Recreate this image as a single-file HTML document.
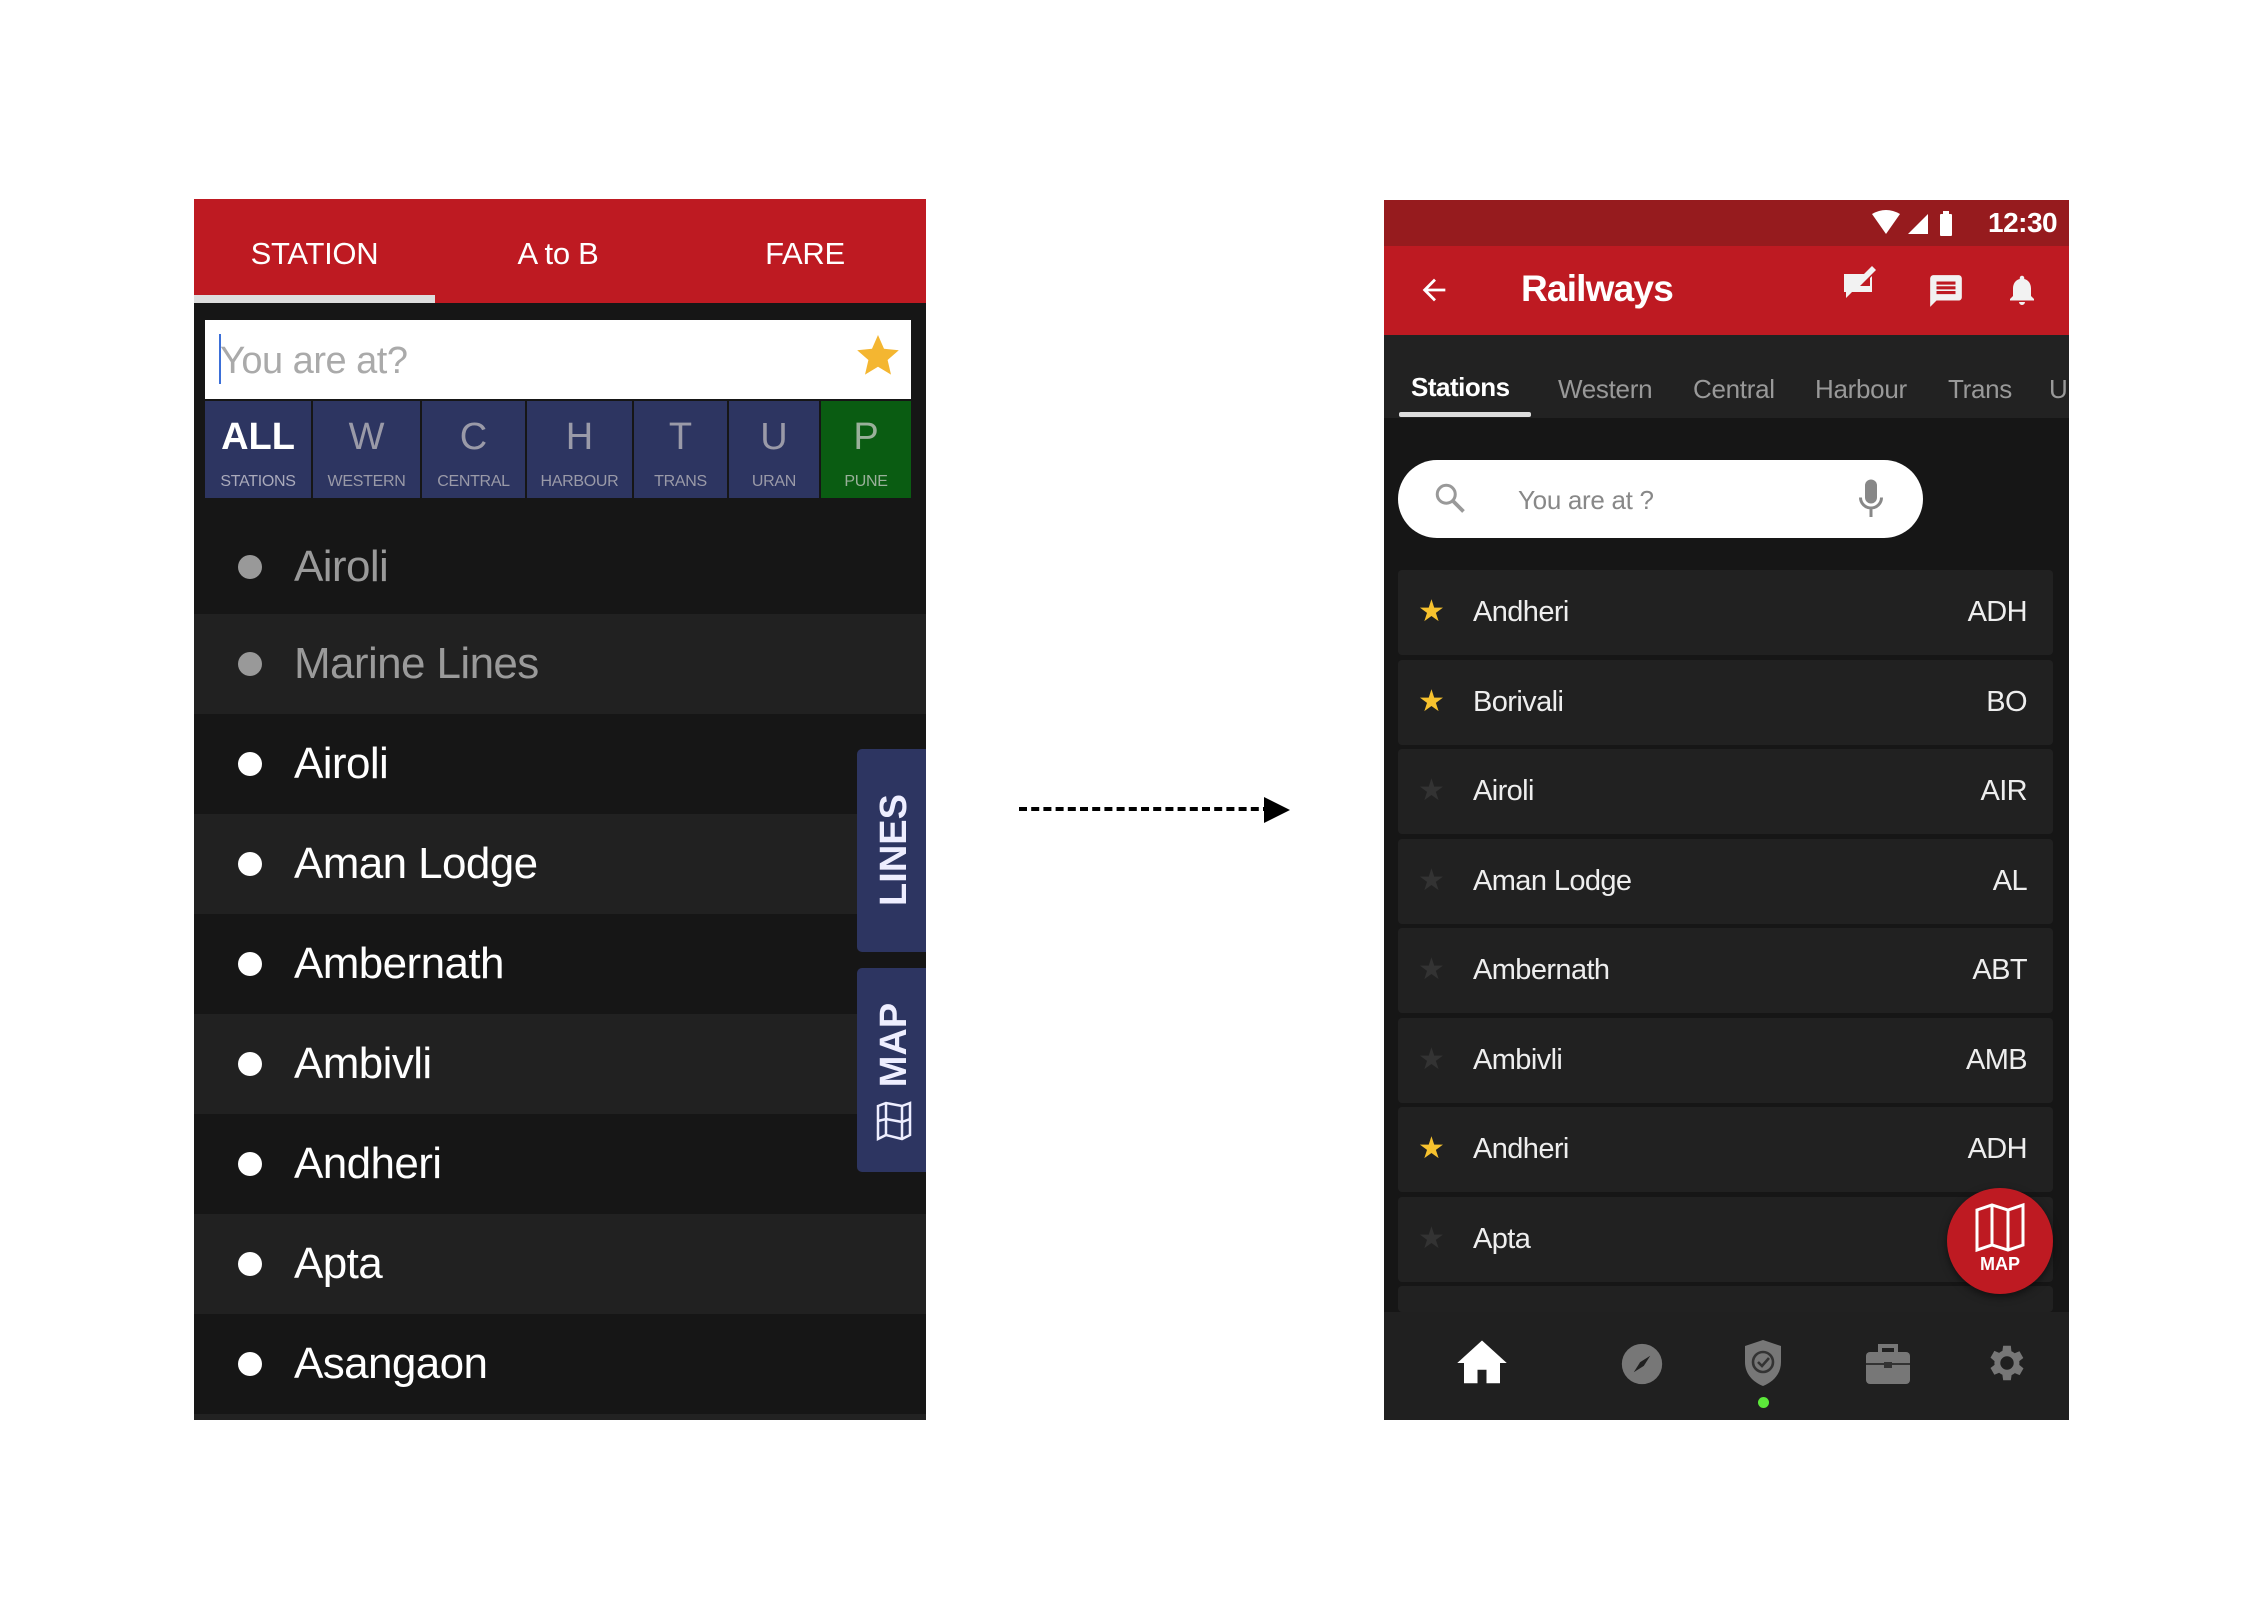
<!DOCTYPE html>
<html><head><meta charset="utf-8"><style>
*{margin:0;padding:0;box-sizing:border-box}
body{width:2262px;height:1618px;background:#fff;position:relative;overflow:hidden;font-family:"Liberation Sans",sans-serif}
.a{position:absolute}
.lrow{position:absolute;left:194px;width:732px;height:100px}
.dot{position:absolute;left:44px;top:38px;width:24px;height:24px;border-radius:50%;background:#fff}
.lrow span{position:absolute;left:100px;top:0;line-height:100px;font-size:44px;color:#fff;letter-spacing:-0.6px}
.lt{position:absolute;top:401px;height:97px;background:#2d3561;text-align:center;color:#9a9aa8}
.lt b{display:block;font-weight:normal;font-size:38px;margin-top:16px;line-height:40px}
.lt i{display:block;font-style:normal;font-size:16px;margin-top:16px;letter-spacing:-0.3px}
.card{position:absolute;left:1398px;width:655px;height:85px;background:#212121;border-radius:4px}
.card .s{position:absolute;left:20px;top:24px;font-size:30px;color:#333}
.card .s.y{color:#f7c22e}
.card .n{position:absolute;left:75px;top:0;line-height:85px;font-size:29px;color:#eee;letter-spacing:-0.6px}
.card .c{position:absolute;right:26px;top:0;line-height:85px;font-size:29px;color:#eee;letter-spacing:-0.6px}
</style></head><body>
<!-- LEFT -->
<div class="a" style="left:194px;top:199px;width:732px;height:1221px;background:#161616"></div>
<div class="a" style="left:194px;top:199px;width:732px;height:104px;background:#be1a22"></div>
<div class="a" style="left:194px;top:295px;width:241px;height:8px;background:#ddd"></div>
<div class="a" style="left:194px;top:236px;width:241px;text-align:center;color:#fff;font-size:31px;letter-spacing:-0.3px">STATION</div>
<div class="a" style="left:458px;top:236px;width:200px;text-align:center;color:#fff;font-size:31px;letter-spacing:-0.3px">A to B</div>
<div class="a" style="left:705px;top:236px;width:200px;text-align:center;color:#fff;font-size:31px;letter-spacing:-0.3px">FARE</div>
<div class="a" style="left:205px;top:320px;width:706px;height:79px;background:#fff"></div>
<div class="a" style="left:219px;top:334px;width:2px;height:50px;background:#3b6fd8"></div>
<div class="a" style="left:220px;top:340px;font-size:38px;color:#aaa;letter-spacing:-0.5px">You are at?</div>
<svg class="a" style="left:853px;top:331px" width="50" height="48" viewBox="0 0 24 24"><path d="M12 2l3 6.9 7.4.7-5.6 4.9 1.7 7.3L12 17.9 5.5 21.8l1.7-7.3L1.6 9.6 9 8.9z" fill="#f4b631"/></svg>
<div class="lt" style="left:205px;width:106px;color:#fff"><b style="font-weight:bold">ALL</b><i style="color:#aab">STATIONS</i></div>
<div class="lt" style="left:313px;width:107px"><b>W</b><i>WESTERN</i></div>
<div class="lt" style="left:422px;width:103px"><b>C</b><i>CENTRAL</i></div>
<div class="lt" style="left:527px;width:105px"><b>H</b><i>HARBOUR</i></div>
<div class="lt" style="left:634px;width:93px"><b>T</b><i>TRANS</i></div>
<div class="lt" style="left:729px;width:90px"><b>U</b><i>URAN</i></div>
<div class="lt" style="left:821px;width:90px;background:#0a5c12;color:#9ab09a"><b>P</b><i>PUNE</i></div>
<div class="lrow" style="top:517px;height:97px;background:#161616"><div class="dot" style="background:#999"></div><span style="color:#9a9a9a">Airoli</span></div>
<div class="lrow" style="top:614px;background:#212121"><div class="dot" style="background:#999"></div><span style="color:#9a9a9a">Marine Lines</span></div>
<div class="lrow" style="top:714px;background:#161616"><div class="dot"></div><span>Airoli</span></div>
<div class="lrow" style="top:814px;background:#212121"><div class="dot"></div><span>Aman Lodge</span></div>
<div class="lrow" style="top:914px;background:#161616"><div class="dot"></div><span>Ambernath</span></div>
<div class="lrow" style="top:1014px;background:#212121"><div class="dot"></div><span>Ambivli</span></div>
<div class="lrow" style="top:1114px;background:#161616"><div class="dot"></div><span>Andheri</span></div>
<div class="lrow" style="top:1214px;background:#212121"><div class="dot"></div><span>Apta</span></div>
<div class="lrow" style="top:1314px;background:#161616"><div class="dot"></div><span>Asangaon</span></div>
<div class="a" style="left:194px;top:1414px;width:732px;height:6px;background:#222"></div>
<div class="a" style="left:857px;top:749px;width:69px;height:203px;background:#2d3561;border-radius:5px 0 0 5px"></div>
<div class="a" style="left:857px;top:968px;width:69px;height:204px;background:#2d3561;border-radius:5px 0 0 5px"></div>
<div class="a" style="left:829px;top:830px;width:130px;height:40px;transform:rotate(-90deg);text-align:center;font-weight:bold;font-size:38px;color:#eef;line-height:40px">LINES</div>
<div class="a" style="left:829px;top:1025px;width:130px;height:40px;transform:rotate(-90deg);text-align:center;font-weight:bold;font-size:38px;color:#eef;line-height:40px">MAP</div>
<svg class="a" style="left:874px;top:1100px" width="40" height="44" viewBox="0 0 40 44"><path d="M4 6l8-3 16 3 8-3v32l-8 4-16-4-8 4z M4 6v32 M12 3v32 M28 6v32 M36 3v32 M4 21l8-2 16 3 8-3" fill="none" stroke="#eef" stroke-width="2.5"/></svg>
<!-- ARROW -->
<div class="a" style="left:1019px;top:807px;width:252px;height:0;border-top:4px dashed #000"></div>
<svg class="a" style="left:1262px;top:795px" width="30" height="30"><path d="M2 2L28 15 2 28z" fill="#000"/></svg>
<!-- RIGHT -->
<div class="a" style="left:1384px;top:200px;width:685px;height:1220px;background:#161616"></div>
<div class="a" style="left:1384px;top:200px;width:685px;height:46px;background:#961b1e"></div>
<svg class="a" style="left:1870px;top:210px" width="90" height="28"><path d="M2 4Q16-4 30 4L16 24z" fill="#fff"/><path d="M38 24L58 4V24z" fill="#fff"/><rect x="70" y="4" width="12" height="22" rx="1" fill="#fff"/><rect x="73" y="1" width="6" height="4" fill="#fff"/></svg>
<div class="a" style="left:1988px;top:207px;font-size:28px;color:#fff;font-weight:bold;letter-spacing:-0.5px">12:30</div>
<div class="a" style="left:1384px;top:246px;width:685px;height:89px;background:#be1a22"></div>
<svg class="a" style="left:1416px;top:273px" width="36" height="34" viewBox="0 0 24 24"><path d="M20 11H7.8l5.6-5.6L12 4l-8 8 8 8 1.4-1.4L7.8 13H20z" fill="#fff"/></svg>
<div class="a" style="left:1521px;top:268px;font-size:37px;font-weight:bold;color:#fff;letter-spacing:-0.8px">Railways</div>
<svg class="a" style="left:1842px;top:262px" width="36" height="42" viewBox="0 0 36 42"><path d="M2 12h22l-10 12h14v-8l2-2v16H10l-6 6v-6H2z" fill="#f2f2f2"/><path d="M12 26l2-6 16-16 4 4-16 16z" fill="#f2f2f2"/></svg>
<svg class="a" style="left:1927px;top:272px" width="38" height="38" viewBox="0 0 24 24"><path d="M20 2H4a2 2 0 0 0-2 2v18l4-4h14a2 2 0 0 0 2-2V4a2 2 0 0 0-2-2zM18 14H6v-2h12zm0-3H6V9h12zm0-3H6V6h12z" fill="#f2f2f2"/></svg>
<svg class="a" style="left:2004px;top:270px" width="36" height="40" viewBox="0 0 24 24"><path d="M12 22a2 2 0 0 0 2-2h-4a2 2 0 0 0 2 2zm6-6v-5c0-3-1.6-5.6-4.5-6.3V4a1.5 1.5 0 0 0-3 0v.7C7.6 5.4 6 8 6 11v5l-2 2v1h16v-1z" fill="#f2f2f2"/></svg>
<div class="a" style="left:1384px;top:335px;width:685px;height:83px;background:#222"></div>
<div class="a" style="left:1411px;top:372px;font-size:26px;font-weight:bold;color:#fff;letter-spacing:-0.5px">Stations</div>
<div class="a" style="left:1558px;top:374px;font-size:26px;color:#999;letter-spacing:-0.3px">Western</div>
<div class="a" style="left:1693px;top:374px;font-size:26px;color:#999;letter-spacing:-0.3px">Central</div>
<div class="a" style="left:1815px;top:374px;font-size:26px;color:#999;letter-spacing:-0.3px">Harbour</div>
<div class="a" style="left:1948px;top:374px;font-size:26px;color:#999;letter-spacing:-0.3px">Trans</div>
<div class="a" style="left:2049px;top:374px;font-size:26px;color:#999;width:20px;overflow:hidden">Uran</div>
<div class="a" style="left:1399px;top:412px;width:132px;height:5px;background:#ddd;border-radius:2px"></div>
<div class="a" style="left:1398px;top:460px;width:525px;height:78px;background:#fff;border-radius:39px"></div>
<svg class="a" style="left:1432px;top:480px" width="36" height="36" viewBox="0 0 24 24"><circle cx="9.5" cy="9.5" r="6" fill="none" stroke="#999" stroke-width="2"/><path d="M14 14l7 7" stroke="#999" stroke-width="2.5"/></svg>
<div class="a" style="left:1518px;top:485px;font-size:26px;color:#888;letter-spacing:-0.3px">You are at ?</div>
<svg class="a" style="left:1856px;top:478px" width="30" height="42" viewBox="0 0 20 28"><rect x="6" y="1" width="8" height="16" rx="4" fill="#888"/><path d="M3 13a7 7 0 0 0 14 0M10 20v6" fill="none" stroke="#888" stroke-width="2"/></svg>
<div class="card" style="top:570px"><div class="s y">★</div><div class="n">Andheri</div><div class="c">ADH</div></div>
<div class="card" style="top:660px"><div class="s y">★</div><div class="n">Borivali</div><div class="c">BO</div></div>
<div class="card" style="top:749px"><div class="s">★</div><div class="n">Airoli</div><div class="c">AIR</div></div>
<div class="card" style="top:839px"><div class="s">★</div><div class="n">Aman Lodge</div><div class="c">AL</div></div>
<div class="card" style="top:928px"><div class="s">★</div><div class="n">Ambernath</div><div class="c">ABT</div></div>
<div class="card" style="top:1018px"><div class="s">★</div><div class="n">Ambivli</div><div class="c">AMB</div></div>
<div class="card" style="top:1107px"><div class="s y">★</div><div class="n">Andheri</div><div class="c">ADH</div></div>
<div class="card" style="top:1197px"><div class="s">★</div><div class="n">Apta</div></div>
<div class="card" style="top:1286px;height:26px"></div>
<div class="a" style="left:1947px;top:1188px;width:106px;height:106px;border-radius:50%;background:#be1a22;box-shadow:0 3px 8px rgba(0,0,0,.5)"></div>
<svg class="a" style="left:1973px;top:1202px" width="54" height="52" viewBox="0 0 54 52"><path d="M4 8l15-5 16 5 15-5v40l-15 5-16-5-15 5z M19 3v40 M35 8v40" fill="none" stroke="#fff" stroke-width="3"/></svg>
<div class="a" style="left:1947px;top:1254px;width:106px;text-align:center;color:#fff;font-weight:bold;font-size:18px">MAP</div>
<div class="a" style="left:1384px;top:1312px;width:685px;height:108px;background:#202020"></div>
<svg class="a" style="left:1455px;top:1336px" width="54" height="54" viewBox="0 0 24 24"><path d="M12 2L1 12h3v9h6v-6h4v6h6v-9h3z" fill="#fff"/></svg>
<svg class="a" style="left:1620px;top:1342px" width="44" height="44" viewBox="0 0 24 24"><circle cx="12" cy="12" r="11" fill="#777"/><path d="M16.5 7.5L13 13l-5.5 3.5L11 11z" fill="#202020"/></svg>
<svg class="a" style="left:1743px;top:1338px" width="40" height="50" viewBox="0 0 20 25"><path d="M10 1l9 3v8c0 6-4 10-9 12C5 22 1 18 1 12V4z" fill="#777"/><circle cx="10" cy="12" r="5" fill="none" stroke="#333" stroke-width="1.3"/><path d="M7.5 12l2 2 3.5-4" fill="none" stroke="#333" stroke-width="1.3"/></svg>
<div class="a" style="left:1758px;top:1397px;width:11px;height:11px;border-radius:50%;background:#5ce83a"></div>
<svg class="a" style="left:1864px;top:1342px" width="48" height="44" viewBox="0 0 24 22"><rect x="1" y="5" width="22" height="16" rx="2" fill="#777"/><path d="M8 5V2h8v3" fill="none" stroke="#777" stroke-width="2"/><path d="M1 11h22" stroke="#333" stroke-width="1"/><rect x="10" y="10" width="4" height="3" fill="#333"/></svg>
<svg class="a" style="left:1984px;top:1340px" width="46" height="46" viewBox="0 0 24 24"><path d="M19.4 13a7.5 7.5 0 0 0 0-2l2.1-1.6-2-3.5-2.5 1a7 7 0 0 0-1.7-1L15 3h-4l-.4 2.7a7 7 0 0 0-1.7 1l-2.5-1-2 3.5L6.5 11a7.5 7.5 0 0 0 0 2l-2.1 1.6 2 3.5 2.5-1a7 7 0 0 0 1.7 1L11 21h4l.4-2.7a7 7 0 0 0 1.7-1l2.5 1 2-3.5zM13 15.5a3.5 3.5 0 1 1 0-7 3.5 3.5 0 0 1 0 7z" fill="#777" transform="translate(-1 0)"/></svg>
</body></html>
